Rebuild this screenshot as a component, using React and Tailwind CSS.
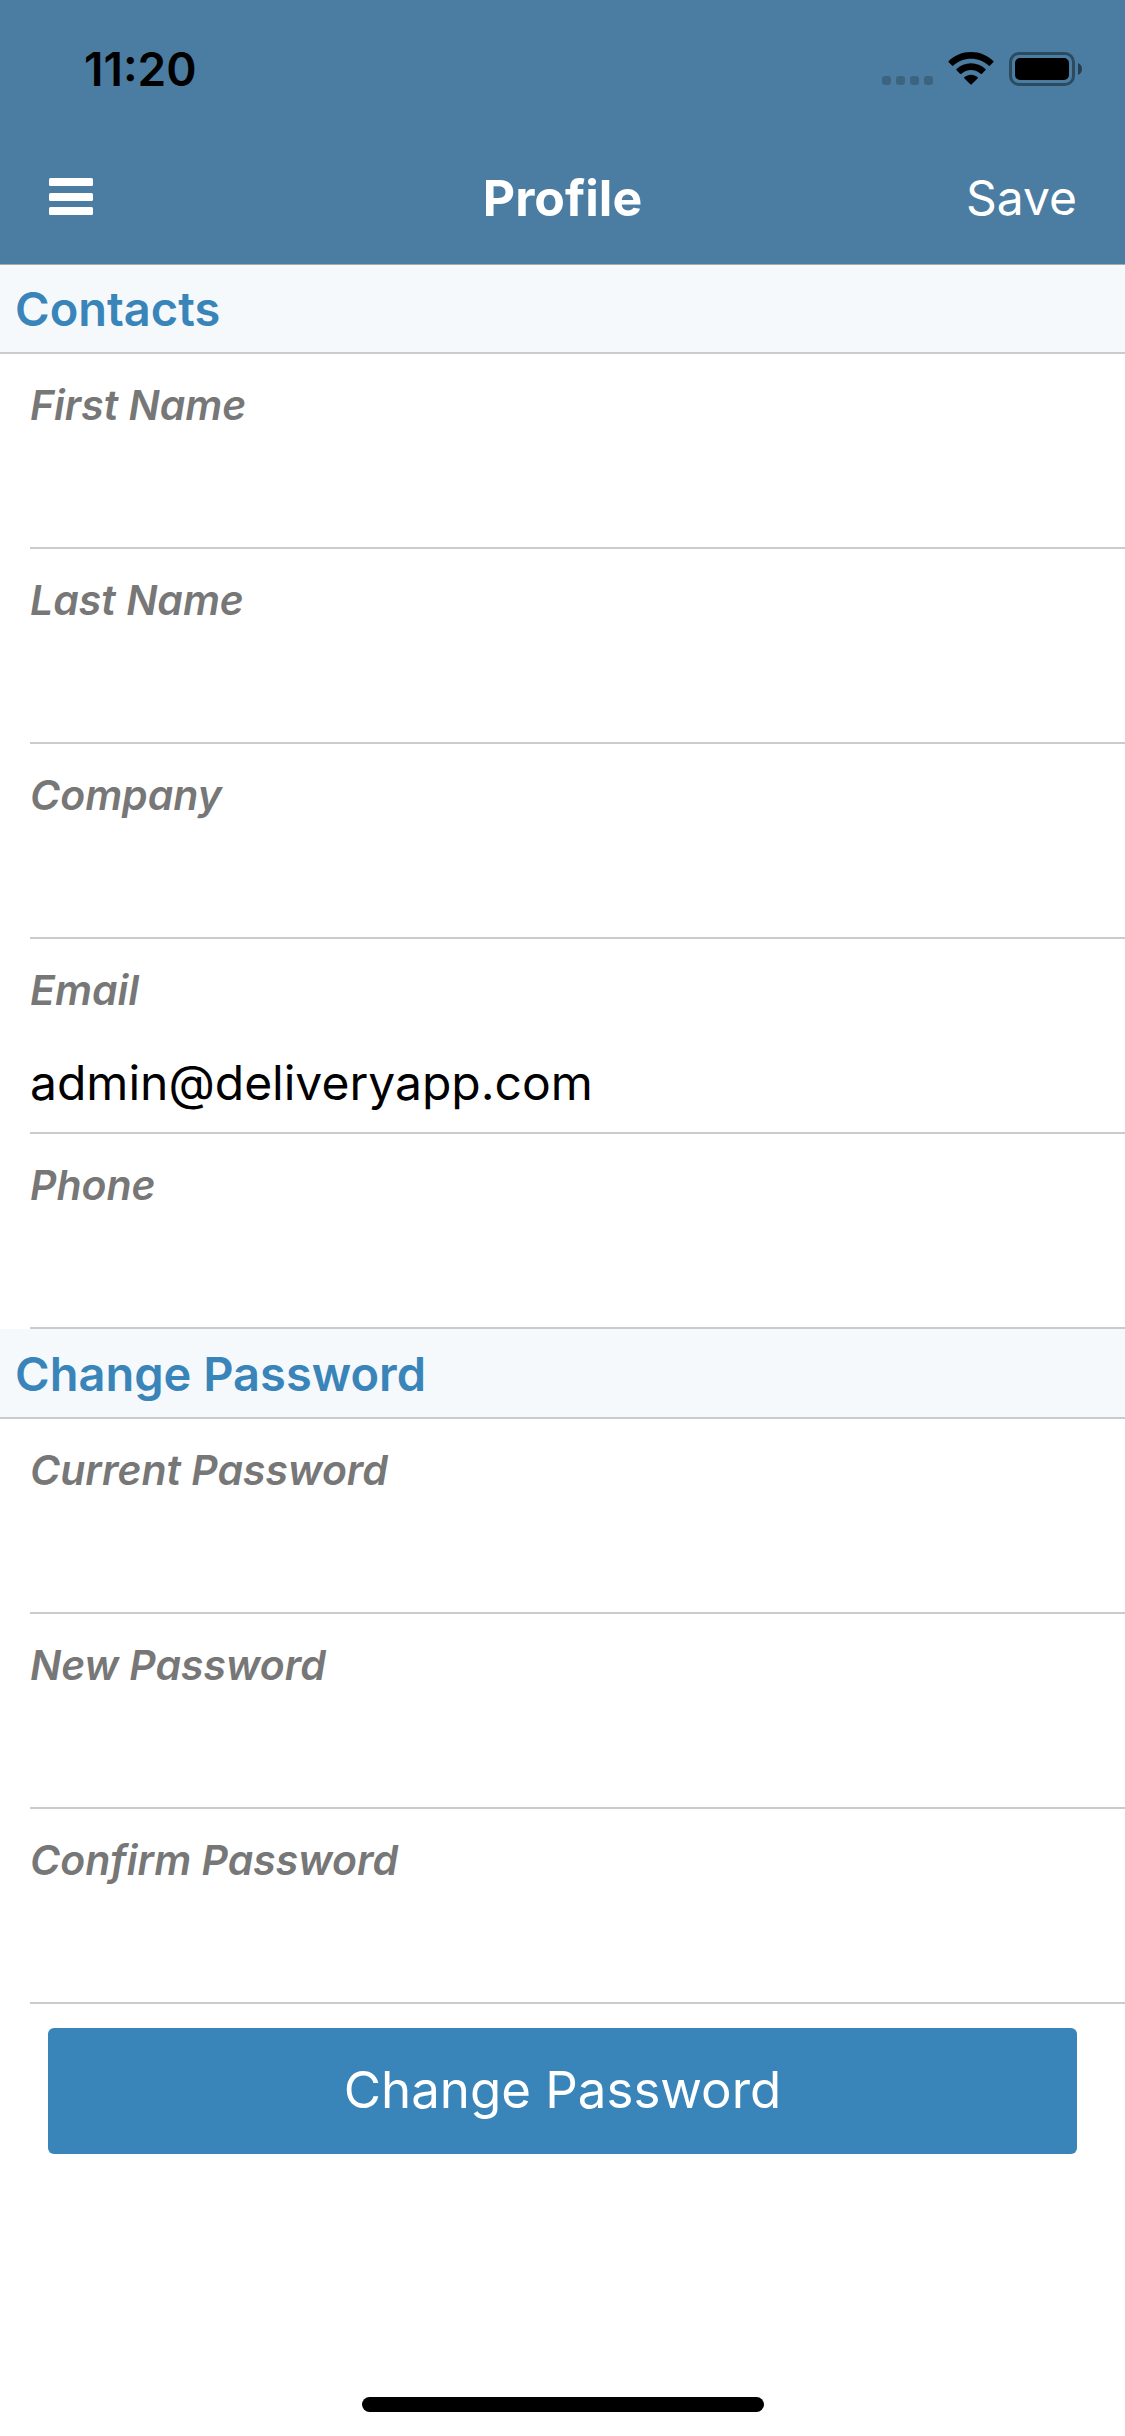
const contactFields = [
  { id: "first-name", label: "First Name", type: "text" },
  { id: "last-name", label: "Last Name", type: "text" },
  { id: "company", label: "Company", type: "text" },
  { id: "email", label: "Email", type: "email", value: "admin@deliveryapp.com" },
  { id: "phone", label: "Phone", type: "tel" },
];

const passwordFields = [
  { id: "current-password", label: "Current Password", type: "password" },
  { id: "new-password", label: "New Password", type: "password" },
  { id: "confirm-password", label: "Confirm Password", type: "password" },
];

function StatusBar() {
  return (
    <div className="flex h-[132px] items-center justify-between pt-[6px] pr-[42px] pl-[84px]">
      <span className="text-[46px] leading-none font-semibold text-black">11:20</span>
      <div className="flex items-center">
        <svg className="h-[34px] w-[52px]" viewBox="0 0 52 34" fill="#000" fillOpacity="0.2" aria-hidden="true">
          <rect x="0" y="24" width="9" height="9" rx="3" />
          <rect x="14" y="24" width="9" height="9" rx="3" />
          <rect x="28" y="24" width="9" height="9" rx="3" />
          <rect x="42" y="24" width="9" height="9" rx="3" />
        </svg>
        <svg className="ml-[14px] h-[34px] w-[46px]" viewBox="0 0 46 34" fill="#000" aria-label="Wi-Fi">
          <path d="M23 0C31.700 0 39.600 3.400 45.300 8.900Q46 9.600 45.300 10.300L42 13.600Q41.300 14.200 40.600 13.600C36 9.300 29.800 6.800 23 6.800S10 9.300 5.400 13.600Q4.700 14.200 4 13.600L.7 10.300Q0 9.600.7 8.900C6.400 3.400 14.300 0 23 0Z" />
          <path d="M23 11.300C28.500 11.300 33.600 13.400 37.400 16.900Q38.100 17.600 37.400 18.300L34 21.700Q33.300 22.300 32.600 21.700C30 19.400 26.700 18 23 18S16 19.400 13.400 21.700Q12.700 22.300 12 21.700L8.600 18.300Q7.900 17.600 8.600 16.900C12.400 13.400 17.500 11.300 23 11.300Z" />
          <path d="M23 22.700C25.500 22.700 27.800 23.600 29.500 25.100Q30.200 25.800 29.500 26.500L23.700 32.300Q23 33 22.300 32.300L16.500 26.500Q15.800 25.800 16.500 25.100C18.200 23.600 20.500 22.700 23 22.700Z" />
        </svg>
        <svg className="ml-[15px] h-[34px] w-[74px]" viewBox="0 0 74 34" aria-label="Battery full">
          <rect x="1.500" y="1.500" width="63" height="31" rx="8.500" fill="none" stroke="#000" strokeOpacity="0.4" strokeWidth="3" />
          <rect x="6" y="6" width="54" height="22" rx="5" fill="#000" />
          <path d="M69 11C71.500 12 73 14.200 73 17S71.500 22 69 23Z" fill="#000" fillOpacity="0.5" />
        </svg>
      </div>
    </div>
  );
}

function NavBar() {
  return (
    <div className="grid h-[132px] grid-cols-3 items-center px-12 text-white">
      <button type="button" aria-label="Menu" className="flex w-[46px] justify-center justify-self-start">
        <svg className="h-[40px] w-[44px]" viewBox="0 0 44 40" fill="currentColor" aria-hidden="true">
          <rect x="0" y="0" width="44" height="8" rx="1.500" />
          <rect x="0" y="15" width="44" height="8" rx="1.500" />
          <rect x="0" y="29" width="44" height="8" rx="1.500" />
        </svg>
      </button>
      <h1 className="text-center text-[50px] leading-none font-bold">Profile</h1>
      <button type="button" className="justify-self-end text-[48px] leading-none">Save</button>
    </div>
  );
}

function SectionHeader({ children }) {
  return (
    <h2 className="flex h-[90px] items-center border-b-2 border-[#cbcbcf] bg-[#f5f9fc] px-[15px] pt-px text-[47px] leading-none font-semibold text-[#3985b9]">
      {children}
    </h2>
  );
}

function Field({ id, label, type, value }) {
  return (
    <div className="ml-[30px] flex h-[195px] flex-col justify-between border-b-2 border-[#cbcbcf] pt-[26px] pb-[11px]">
      <label htmlFor={id} className="text-[41px] leading-[50px] font-semibold text-[#777777] italic">
        {label}
      </label>
      <input
        id={id}
        type={type}
        defaultValue={value}
        className="h-[78px] w-full bg-transparent text-[48px] text-black outline-none"
      />
    </div>
  );
}

export default function App() {
  return (
    <div className="flex min-h-screen flex-col bg-white font-['Inter',sans-serif]">
      <header className="relative bg-[#4a7da1] shadow-[0_1px_0_#a7a9ad]">
        <StatusBar />
        <NavBar />
      </header>
      <main>
        <form>
          <SectionHeader>Contacts</SectionHeader>
          {contactFields.map((field) => (
            <Field key={field.id} {...field} />
          ))}
        </form>
        <form>
          <SectionHeader>Change Password</SectionHeader>
          {passwordFields.map((field) => (
            <Field key={field.id} {...field} />
          ))}
          <div className="px-12 pt-6">
            <button
              type="button"
              className="h-[126px] w-full rounded-md bg-[#3985b9] pb-1 text-[51px] leading-none text-white"
            >
              Change Password
            </button>
          </div>
        </form>
      </main>
      <footer className="mt-auto flex justify-center pb-6">
        <div className="h-[15px] w-[402px] rounded-full bg-black" />
      </footer>
    </div>
  );
}
